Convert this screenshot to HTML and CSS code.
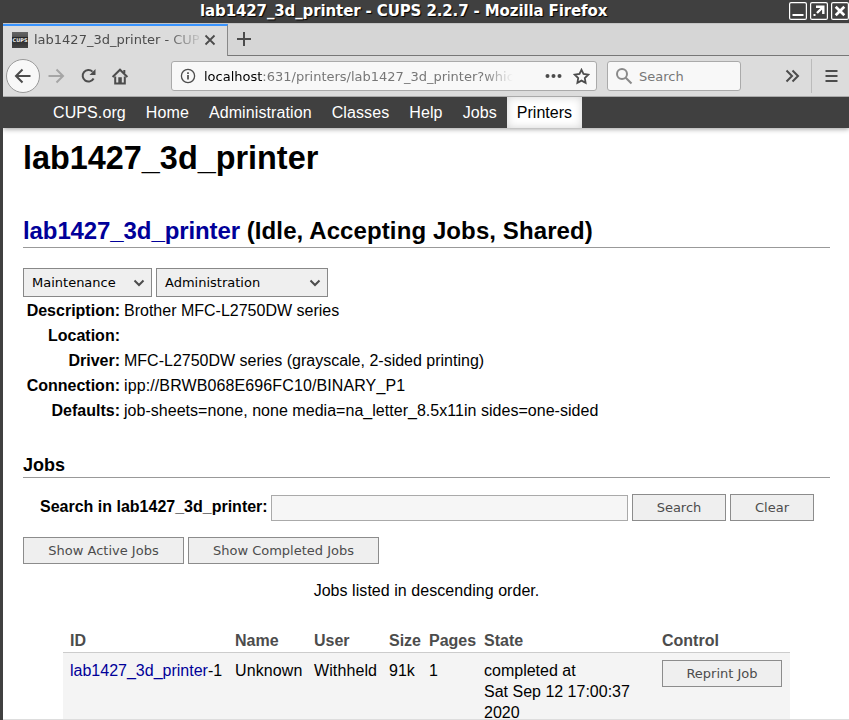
FILE: index.html
```html
<!DOCTYPE html>
<html lang="en">
<head>
<meta charset="utf-8">
<title>lab1427_3d_printer - CUPS 2.2.7</title>
<link rel="stylesheet" href="styles.css">
</head>
<body>
<div class="window">
  <header class="titlebar">
    <span class="window-title">lab1427_3d_printer - CUPS 2.2.7 - Mozilla Firefox</span>
    <div class="window-controls">
      <svg width="18" height="18" viewBox="0 0 18 18"><rect x=".6" y=".6" width="16.8" height="16.8" rx="1.5"/><path d="M3.5 13h11" stroke-width="2"/></svg>
      <svg width="18" height="18" viewBox="0 0 18 18"><rect x=".6" y=".6" width="16.8" height="16.8" rx="1.5"/><path d="M6 4.700h7.300v7.300M13 5L7 11" stroke-width="2.4"/><path d="M3.500 13h2" stroke-width="2"/></svg>
      <svg width="18" height="18" viewBox="0 0 18 18"><rect x=".6" y=".6" width="16.8" height="16.8" rx="1.5"/><path d="M4.700 4.700l8.600 8.600M13.300 4.700l-8.600 8.600" stroke-width="2.7"/></svg>
    </div>
  </header>
  <div class="tabs">
    <div class="tab">
      <span class="favicon">CUPS</span>
      <span class="tab-title">lab1427_3d_printer - CUP</span>
      <svg class="tab-close" width="12" height="12" viewBox="0 0 12 12"><path d="M1.500 1.500l9 9M10.500 1.500l-9 9"/></svg>
    </div>
    <svg class="new-tab" width="16" height="16" viewBox="0 0 16 16"><path d="M8 1v14M1 8h14"/></svg>
  </div>
  <div class="toolbar">
    <span class="back"><svg width="18" height="16" viewBox="0 0 18 16"><path d="M8.500 1.500L2 8l6.500 6.500M2.300 8H16.500"/></svg></span>
    <svg class="forward" width="18" height="16" viewBox="0 0 18 16"><path d="M9.500 1.500L16 8l-6.500 6.500M15.700 8H1.500"/></svg>
    <svg class="reload" width="17" height="16" viewBox="0 0 17 16"><path d="M12.500 3.600A5.800 5.800 0 1 0 13.600 10.500"/><path class="solid" d="M15.500 1v6H9.500z"/></svg>
    <svg class="home" width="18" height="17" viewBox="0 0 18 17"><path d="M1.600 9L9 1.700 16.400 9"/><path d="M4.200 8.500v7h9.600v-7"/><path class="solid" d="M7.300 9.200h3.500v5.800H7.300zM12.300 2h2v3h-2z"/></svg>
    <div class="address">
      <svg class="info" width="16" height="16" viewBox="0 0 16 16"><circle cx="8" cy="8" r="6.600"/><path d="M8 7v4.500M8 4.200v1.700" stroke-width="1.700"/></svg>
      <span class="url"><span class="host">localhost</span>:631/printers/lab1427_3d_printer?whic</span>
      <svg class="dots" width="17" height="6" viewBox="0 0 17 6"><circle cx="2.500" cy="3" r="2"/><circle cx="8.500" cy="3" r="2"/><circle cx="14.500" cy="3" r="2"/></svg>
      <svg class="star" width="17" height="17" viewBox="0 0 17 17"><path d="M8.500 1.800l2 4.200 4.700.7-3.400 3.400.8 4.800-4.100-2.300-4.100 2.300.8-4.800-3.400-3.400 4.700-.7z"/></svg>
    </div>
    <div class="search">
      <svg width="18" height="18" viewBox="0 0 18 18"><circle cx="7" cy="7" r="5"/><path d="M10.700 10.700l5.800 5.800"/></svg>
      <span>Search</span>
    </div>
    <svg class="overflow" width="15" height="14" viewBox="0 0 15 14"><path d="M1.500 1.500L7 7l-5.500 5.500M7.500 1.500L13 7l-5.500 5.500"/></svg>
    <span class="separator"></span>
    <svg class="menu" width="13" height="14" viewBox="0 0 13 14"><path d="M.5 2h12M.5 7h12M.5 12h12"/></svg>
  </div>
  <main class="page">
    <nav class="nav">
      <a>CUPS.org</a><a>Home</a><a>Administration</a><a>Classes</a><a>Help</a><a>Jobs</a><a class="active">Printers</a>
    </nav>
    <div class="content">
      <h1>lab1427_3d_printer</h1>
      <h2><a>lab1427_3d_printer</a> (Idle, Accepting Jobs, Shared)</h2>
      <div class="selects">
        <div class="select maintenance">Maintenance<svg width="12" height="8" viewBox="0 0 12 8"><path d="M1.500 1.500L6 6l4.500-4.500"/></svg></div>
        <div class="select administration">Administration<svg width="12" height="8" viewBox="0 0 12 8"><path d="M1.500 1.500L6 6l4.500-4.500"/></svg></div>
      </div>
      <dl class="details">
        <dt>Description:</dt><dd>Brother MFC-L2750DW series</dd>
        <dt>Location:</dt><dd></dd>
        <dt>Driver:</dt><dd>MFC-L2750DW series (grayscale, 2-sided printing)</dd>
        <dt>Connection:</dt><dd class="uri">ipp://BRWB068E696FC10/BINARY_P1</dd>
        <dt>Defaults:</dt><dd class="defaults">job-sheets=none, none media=na_letter_8.5x11in sides=one-sided</dd>
      </dl>
      <h3>Jobs</h3>
      <div class="job-search">
        <b>Search in lab1427_3d_printer:</b>
        <span class="field"></span>
        <button class="search-button">Search</button>
        <button class="clear-button">Clear</button>
      </div>
      <div class="filters">
        <button class="active-button">Show Active Jobs</button>
        <button class="completed-button">Show Completed Jobs</button>
      </div>
      <p class="order">Jobs listed in descending order.</p>
      <div class="jobs">
        <div class="row head"><span>ID</span><span>Name</span><span>User</span><span>Size</span><span>Pages</span><span>State</span><span>Control</span></div>
        <div class="row job"><span><a>lab1427_3d_printer</a>-1</span><span class="name">Unknown</span><span class="name">Withheld</span><span>91k</span><span>1</span><span>completed at<br>Sat Sep 12 17:00:37<br>2020</span><span><button class="reprint">Reprint Job</button></span></div>
      </div>
    </div>
  </main>
</div>
</body>
</html>
```
FILE: styles.css
```css
* { box-sizing: border-box; }
body { margin: 0; background: #404040; font-family: "Liberation Sans", Arial, sans-serif; font-size: 16px; color: #000; overflow: hidden; }
svg { display: block; flex: none; fill: none; stroke: #4c4c4c; stroke-width: 2; }
svg .solid { fill: #4c4c4c; stroke: none; }
.window { height: 720px; display: flex; flex-direction: column; padding-left: 3px; overflow: hidden; }

.titlebar { height: 23px; flex: none; display: flex; align-items: center; padding-left: 197px; color: #fff; font: bold 15px/23px "DejaVu Sans", sans-serif; white-space: nowrap; }
.window-title { width: 590px; height: 23px; letter-spacing: -.12px; text-shadow: 1px 1px 1px #000; }
.window-controls { display: flex; gap: 3px; margin-top: -1px; }
.window-controls svg { stroke: #fff; stroke-width: 1.2; }

.tabs { height: 33px; flex: none; display: flex; background: #d6d6d6; border-bottom: 1px solid #777; border-top: 1px solid #c4c4c4; }
.tab { width: 225px; height: 32px; background: #dcdcdc; border-top: 2px solid #3994ff; border-right: 1px solid #888; display: flex; align-items: center; padding: 0 0 3px 9px; }
.favicon { width: 16px; height: 16px; flex: none; background: linear-gradient(#666 0, #555 28%, #252525 31%, #444); color: #eee; font: bold 5px/16px "DejaVu Sans", sans-serif; text-align: center; }
.tab-title { width: 165px; margin-left: 6px; overflow: hidden; white-space: nowrap; color: #4b4b4b; font: 13px/20px "DejaVu Sans", sans-serif; -webkit-mask-image: linear-gradient(90deg, #000 132px, transparent 170px); mask-image: linear-gradient(90deg, #000 132px, transparent 170px); }
.tab-close { margin-left: 5px; stroke-width: 1.8; }
.new-tab { margin: 7px 0 0 8px; }

.toolbar { height: 41px; flex: none; display: flex; align-items: center; background: #dcdcdc; border-bottom: 1px solid #aaa; padding-left: 3px; font: 13px/28px "DejaVu Sans", sans-serif; }
.back { width: 34px; height: 34px; flex: none; border: 1px solid #999; border-radius: 50%; background: #f8f8f8; display: flex; align-items: center; justify-content: center; }
.forward { margin-left: 7px; stroke: #a5a5a5; }
.reload { margin-left: 15px; }
.home { margin-left: 14px; }
.address { width: 426px; height: 30px; flex: none; margin-left: 42px; border: 1px solid #aaa; border-radius: 3px; background: #f8f8f8; display: flex; align-items: center; }
.info { margin-left: 8px; stroke-width: 1.3; }
.url { width: 309px; height: 28px; padding-top: 1px; margin-left: 8px; overflow: hidden; white-space: nowrap; color: #777; -webkit-mask-image: linear-gradient(90deg, #000 280px, transparent 309px); mask-image: linear-gradient(90deg, #000 280px, transparent 309px); }
.host { color: #000; }
.dots { margin-left: 32px; fill: #4c4c4c; stroke: none; }
.star { margin-left: 11px; stroke-width: 1.8; }
.search { width: 134px; height: 30px; flex: none; margin-left: 10px; border: 1px solid #aaa; border-radius: 3px; background: #f8f8f8; display: flex; align-items: center; gap: 6px; padding-left: 7px; color: #777; }
.search span { height: 28px; padding-top: 1px; }
.search svg { stroke: #8a8a8a; }
.overflow { margin-left: 44px; }
.separator { width: 1px; height: 34px; margin-left: 11px; background: #bbb; }
.menu { margin-left: 13px; }

.page { flex: 1; min-height: 0; background: #fff; overflow: hidden; border-bottom: 1px solid #ddd; }
.nav { height: 31px; display: flex; background: #404040; padding-left: 40px; box-shadow: 0 1px 5px rgba(0, 0, 0, .4); }
.nav a { padding: 0 10px; color: #fff; line-height: 31px; letter-spacing: .1px; white-space: nowrap; }
.nav .active { background: #fff; color: #000; letter-spacing: 0; box-shadow: inset 0 0 8px rgba(0, 0, 0, .18); }
.content { padding: 0 19px 0 20px; }
.content a { color: #000099; }
h1, h2, h3, p, dl, dd { margin: 0; }
h1 { height: 84px; padding-top: 10px; font-size: 32.400px; line-height: 40px; }
h2 { height: 36px; border-bottom: 1px solid #999; font-size: 24px; line-height: 38px; letter-spacing: .1px; white-space: nowrap; }
h2 a { letter-spacing: -.1px; }
.selects { display: flex; gap: 4px; padding-top: 20px; }
.select { height: 29px; border: 1px solid #888; background: #efefef; display: flex; align-items: center; justify-content: space-between; padding: 0 6px 0 8px; font: 13px/27px "DejaVu Sans", sans-serif; }
.maintenance { width: 129px; }
.administration { width: 172px; }
.details { display: grid; grid-template-columns: 97px 1fr; column-gap: 4px; grid-auto-rows: 25px; padding-top: 1px; line-height: 25px; white-space: nowrap; }
.uri { letter-spacing: .11px; }
.defaults { letter-spacing: .03px; }
dt { text-align: right; font-weight: bold; }
h3 { height: 55px; padding-top: 30px; border-bottom: 1px solid #999; font-size: 18px; line-height: 24px; }
.job-search { display: flex; gap: 4px; height: 43px; padding: 16px 0 0 17px; line-height: 26px; white-space: nowrap; }
.job-search b { width: 227px; }
.field { width: 357px; height: 26px; margin-top: 1px; border: 1px solid #aaa; background: #f6f6f6; }
button { height: 27px; flex: none; border: 1px solid #8c8c8c; border-radius: 0; background: #efefef; color: #4c4c4c; padding: 0; font: 13px/25px "DejaVu Sans", sans-serif; display: block; }
.search-button { width: 94px; }
.clear-button { width: 84px; }
.filters { display: flex; gap: 4px; padding-top: 16px; }
.active-button { width: 161px; }
.completed-button { width: 191px; }
.order { padding-top: 16px; text-align: center; line-height: 21px; letter-spacing: .05px; }
.jobs { width: 727px; margin: 28px 0 0 40px; }
.row { display: grid; grid-template-columns: 165px 79px 75px 40px 55px 178px 120px; padding-left: 7px; white-space: nowrap; line-height: 21px; }
.head { height: 24px; border-bottom: 1px solid #ccc; color: #4c4c4c; font-weight: bold; line-height: 23px; }
.job { height: 100px; padding-top: 7px; background: #f4f4f4; }
.name { letter-spacing: .1px; }
.reprint { width: 120px; }
```
